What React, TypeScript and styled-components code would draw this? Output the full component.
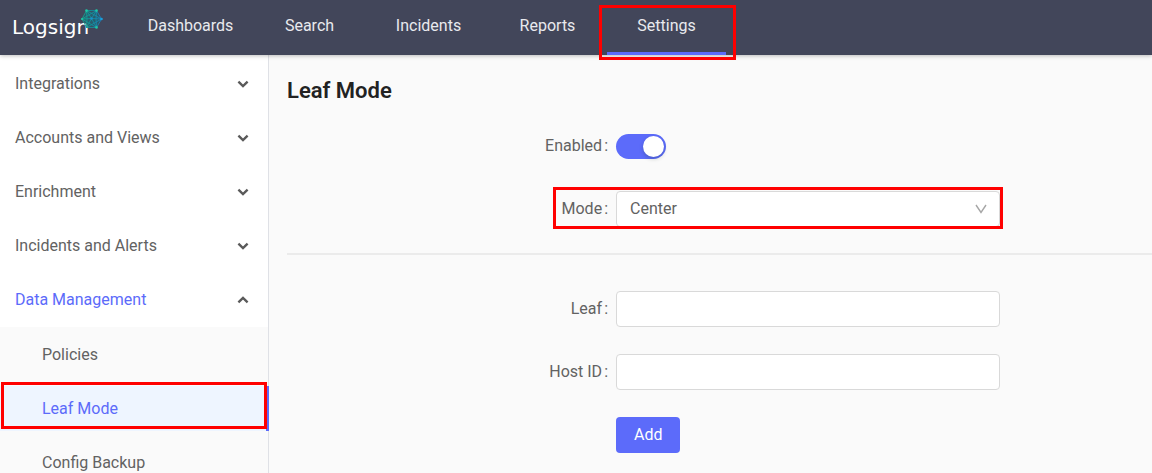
import React, { useState } from "react";
import styled, { createGlobalStyle, css } from "styled-components";

const accent = "#5c6bfa";

const GlobalStyle = createGlobalStyle`
  * { box-sizing: border-box; }
  html, body, #root { height: 100%; }
  body {
    margin: 0;
    overflow: hidden;
    background: #fafafa;
    color: #626262;
    font-family: Roboto, "Liberation Sans", sans-serif;
    font-size: 16px;
    line-height: 24px;
  }
`;

const highlight = css`
  &::after {
    content: "";
    position: absolute;
    border: 3px solid #ff0000;
    pointer-events: none;
  }
`;

const Page = styled.div`
  display: flex;
  flex-direction: column;
  min-height: 100%;
`;

const TopBar = styled.header`
  position: relative;
  z-index: 1;
  display: flex;
  flex: none;
  height: 55px;
  background: #42465a;
  box-shadow: 0 1px 4px rgba(0, 0, 0, 0.25);
`;

const Brand = styled.a`
  display: flex;
  flex: none;
  width: 131px;
  padding: 8px 0 0 12px;
  color: #ffffff;
  font-family: "DejaVu Sans", sans-serif;
  font-size: 20px;
  line-height: 38px;
  text-decoration: none;
`;

const BrandMark = styled.svg`
  flex: none;
  width: 24px;
  height: 22px;
  margin-left: -9px;
`;

const Nav = styled.nav`
  display: flex;
`;

const NavItem = styled.a<{ $active?: boolean }>`
  position: relative;
  width: 119px;
  border-bottom: 3px solid ${(p) => (p.$active ? accent : "transparent")};
  color: #e9eaee;
  line-height: 51px;
  text-align: center;
  text-decoration: none;
  ${(p) => p.$active && highlight}
  &::after { inset: 5px -10px -8px -8px; }
`;

const Body = styled.div`
  display: flex;
  flex: 1;
`;

const Sidebar = styled.aside`
  flex: none;
  width: 269px;
  border-right: 1px solid #dfe1e6;
  background: #ffffff;
`;

const Groups = styled.div`
  padding-top: 2px;
`;

const Group = styled.button<{ $open?: boolean }>`
  display: flex;
  align-items: center;
  justify-content: space-between;
  width: 100%;
  height: 54px;
  padding: 0 19px 0 15px;
  border: 0;
  background: none;
  color: ${(p) => (p.$open ? accent : "inherit")};
  font: inherit;
  text-align: left;
`;

const Chevron = styled.svg<{ $up?: boolean }>`
  width: 12px;
  height: 8px;
  color: #5a5a5a;
  transform: ${(p) => (p.$up ? "rotate(180deg)" : "none")};
`;

const SubMenu = styled.div`
  display: grid;
  gap: 9px;
  padding: 5px 0;
  background: #fafafa;
`;

const SubItem = styled.a<{ $active?: boolean }>`
  position: relative;
  padding-left: 42px;
  margin-right: -1px;
  border-right: 3px solid ${(p) => (p.$active ? accent : "transparent")};
  background: ${(p) => (p.$active ? "#eef5ff" : "transparent")};
  background-clip: padding-box;
  color: ${(p) => (p.$active ? accent : "inherit")};
  line-height: 45px;
  text-decoration: none;
  ${(p) => p.$active && highlight}
  &::after { inset: -4px -1px 2px 1px; }
`;

const Main = styled.main`
  flex: 1;
  min-width: 0;
  padding: 22px 0 0 18px;
`;

const Title = styled.h1`
  margin: 0 0 23px;
  color: #222222;
  font-size: 22px;
  font-weight: 600;
  line-height: 28px;
`;

const Form = styled.form`
  display: grid;
  gap: 27px;
`;

const Row = styled.div`
  display: grid;
  grid-template-columns: minmax(80px, 1fr) minmax(0, 384px) 152px;
  align-items: center;
  height: 36px;
`;

const Label = styled.label`
  padding-right: 8px;
  text-align: right;
`;

const Colon = styled.span`
  margin-left: 2px;
`;

const Field = styled.div`
  position: relative;
  grid-column: 2;
  display: flex;
  align-items: center;
`;

const HighlightedField = styled(Field)`
  ${highlight}
  &::after { inset: -4px -3px -2px -63px; }
`;

const Toggle = styled.input`
  appearance: none;
  display: flex;
  justify-content: flex-start;
  width: 50px;
  height: 25px;
  margin: 0;
  padding: 2px;
  border-radius: 13px;
  background: #bfbfbf;
  &:checked {
    background: ${accent};
    justify-content: flex-end;
  }
  &::before {
    content: "";
    width: 21px;
    height: 21px;
    border-radius: 50%;
    background: #ffffff;
    box-shadow: 0 2px 4px rgba(0, 35, 11, 0.2);
  }
`;

const boxed = css`
  width: 100%;
  height: 36px;
  padding: 0 13px;
  border: 1px solid #d9d9d9;
  border-radius: 4px;
  background: #ffffff;
  color: inherit;
  font: inherit;
`;

const Select = styled.select`
  ${boxed}
  appearance: none;
`;

const SelectArrow = styled.svg`
  position: absolute;
  right: 13px;
  width: 12px;
  height: 10px;
  color: #a6a6a6;
  pointer-events: none;
`;

const TextInput = styled.input`
  ${boxed}
`;

const Divider = styled.hr`
  width: 100%;
  height: 2px;
  margin: -1px 0 9px;
  border: 0;
  background: #ebebeb;
`;

const AddButton = styled.button`
  height: 36px;
  padding: 0 18px;
  border: 0;
  border-radius: 4px;
  background: ${accent};
  color: #ffffff;
  font: inherit;
`;

const groups = ["Integrations", "Accounts and Views", "Enrichment", "Incidents and Alerts", "Data Management"];
const pages = ["Policies", "Leaf Mode", "Config Backup"];
const sections = ["Dashboards", "Search", "Incidents", "Reports", "Settings"];

function Logo() {
  return (
    <Brand href="#home">
      Logsign
      <BrandMark viewBox="0 0 24 22" fill="none" aria-hidden="true">
        <defs>
          <linearGradient id="mesh" gradientUnits="userSpaceOnUse" x1="2" y1="0" x2="22" y2="0">
            <stop offset="0" stopColor="#12a58c" />
            <stop offset="0.5" stopColor="#128f9c" />
            <stop offset="1" stopColor="#1583c4" />
          </linearGradient>
        </defs>
        <path d="M6.5 3.5H16.5L20.5 11L16.5 18.5H6.5L2.5 11Z" fill="#15707f" fillOpacity="0.55" />
        <g stroke="url(#mesh)" strokeWidth="0.9">
          <path d="M6.5 2.5L16.5 2.6L21.5 11L16.5 19.5L6.5 19.4L2 11Z" />
          <path d="M6.5 2.5L11.5 10.5L16.5 2.5M21.5 11L11.5 10.5L2 11M6.5 19.5L11.5 10.5L16.5 19.5" />
          <path d="M6.5 2.5L7 11L6.5 19.5M16.5 2.5L16 11L16.5 19.5" />
          <path d="M6.5 2.5L21.5 11L6.5 19.5M16.5 2.5L2 11L16.5 19.5" />
        </g>
        <g fill="#1ec8a6">
          <circle cx="6.5" cy="2.6" r="1.3" />
          <circle cx="16.5" cy="2.6" r="1.3" />
          <circle cx="21.5" cy="11" r="1.3" fill="#1a9fdc" />
          <circle cx="16.5" cy="19.4" r="1.3" />
          <circle cx="11.5" cy="10.5" r="1.2" fill="#1a8fd0" />
          <circle cx="2" cy="11" r="1.1" />
        </g>
      </BrandMark>
    </Brand>
  );
}

export default function App() {
  const [enabled, setEnabled] = useState(true);
  return (
    <Page>
      <GlobalStyle />
      <TopBar>
        <Logo />
        <Nav>
          {sections.map((s) => (
            <NavItem key={s} href={"#" + s} $active={s === "Settings"}>{s}</NavItem>
          ))}
        </Nav>
      </TopBar>
      <Body>
        <Sidebar>
          <Groups>
            {groups.map((g) => {
              const open = g === "Data Management";
              return (
                <Group key={g} type="button" $open={open} aria-expanded={open}>
                  {g}
                  <Chevron $up={open} viewBox="0 0 12 8" fill="none" stroke="currentColor" strokeWidth="2.4">
                    <path d="M1.4 1.6L6 6L10.6 1.6" />
                  </Chevron>
                </Group>
              );
            })}
          </Groups>
          <SubMenu>
            {pages.map((p) => (
              <SubItem key={p} href={"#" + p} $active={p === "Leaf Mode"}>{p}</SubItem>
            ))}
          </SubMenu>
        </Sidebar>
        <Main>
          <Title>Leaf Mode</Title>
          <Form onSubmit={(e) => e.preventDefault()}>
            <Row>
              <Label htmlFor="enabled">Enabled<Colon>:</Colon></Label>
              <Field>
                <Toggle id="enabled" type="checkbox" checked={enabled} onChange={(e) => setEnabled(e.target.checked)} />
              </Field>
            </Row>
            <Row>
              <Label htmlFor="mode">Mode<Colon>:</Colon></Label>
              <HighlightedField>
                <Select id="mode"><option>Center</option></Select>
                <SelectArrow viewBox="0 0 12 10" fill="none" stroke="currentColor" strokeWidth="1.4">
                  <path d="M1 1L6 8.5L11 1" />
                </SelectArrow>
              </HighlightedField>
            </Row>
            <Divider />
            <Row>
              <Label htmlFor="leaf">Leaf<Colon>:</Colon></Label>
              <Field><TextInput id="leaf" type="text" /></Field>
            </Row>
            <Row>
              <Label htmlFor="host">Host ID<Colon>:</Colon></Label>
              <Field><TextInput id="host" type="text" /></Field>
            </Row>
            <Row>
              <Field><AddButton type="submit">Add</AddButton></Field>
            </Row>
          </Form>
        </Main>
      </Body>
    </Page>
  );
}
